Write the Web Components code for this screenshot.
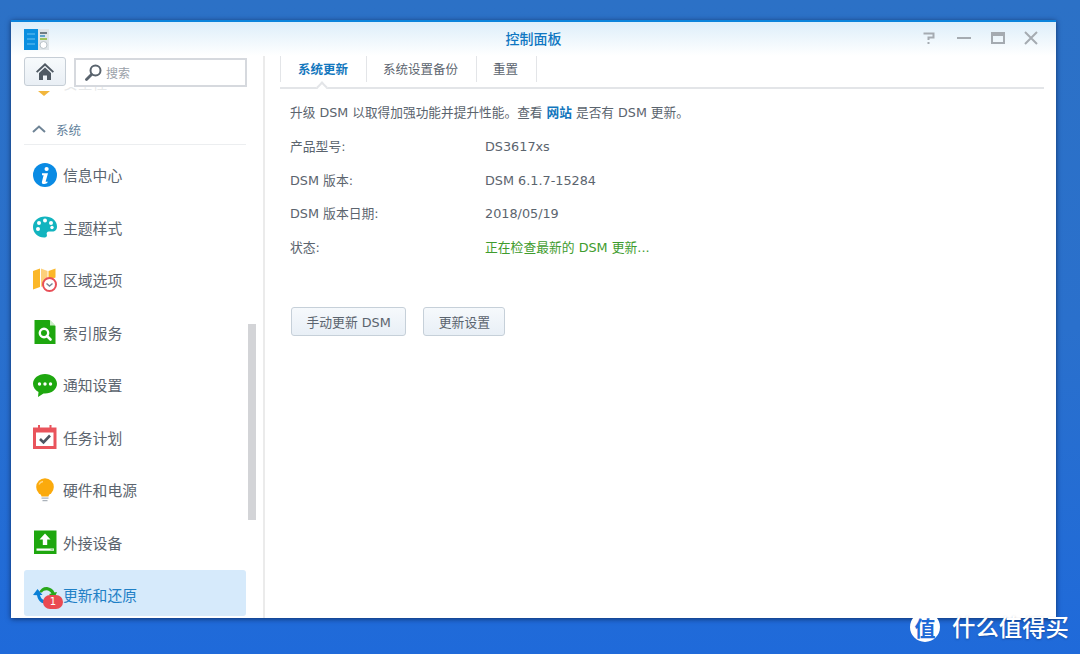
<!DOCTYPE html>
<html lang="zh">
<head>
<meta charset="utf-8">
<title>控制面板</title>
<style>
    html, body { margin: 0; height: 100%; }
    body {
        width: 1080px;
        height: 654px;
        overflow: hidden;
        background: linear-gradient(180deg, #2c71c6 0%, #2a70cc 50%, #1f6ada 100%);
        font-family: "DejaVu Sans", "Noto Sans CJK SC", sans-serif;
    }
    a { color: #1377bd; font-weight: 700; }
</style>
</head>
<body>
<dsm-window title-text="控制面板">
    <dsm-sidebar slot="side">
        <side-item icon="shield" class="cut">安全性</side-item>
        <side-group>系统</side-group>
        <side-item icon="info">信息中心</side-item>
        <side-item icon="palette">主题样式</side-item>
        <side-item icon="map">区域选项</side-item>
        <side-item icon="finder">索引服务</side-item>
        <side-item icon="chat">通知设置</side-item>
        <side-item icon="task">任务计划</side-item>
        <side-item icon="bulb">硬件和电源</side-item>
        <side-item icon="upload">外接设备</side-item>
        <side-item icon="update" badge="1" active>更新和还原</side-item>
    </dsm-sidebar>
    <dsm-tabs slot="main" tabs="系统更新,系统设置备份,重置"></dsm-tabs>
    <update-panel slot="main">
        <span slot="intro">升级 DSM 以取得加强功能并提升性能。查看 <a>网站</a> 是否有 DSM 更新。</span>
        <info-row label="产品型号:">DS3617xs</info-row>
        <info-row label="DSM 版本:">DSM 6.1.7-15284</info-row>
        <info-row label="DSM 版本日期:">2018/05/19</info-row>
        <info-row label="状态:" status>正在检查最新的 DSM 更新...</info-row>
        <dsm-button slot="actions">手动更新 DSM</dsm-button>
        <dsm-button slot="actions">更新设置</dsm-button>
    </update-panel>
</dsm-window>
<site-mark></site-mark>

<script>
const CJK = '"DejaVu Sans", "Noto Sans CJK SC", sans-serif';

const ICONS = {
    shield: '<path d="M5 21h12l-6 5z" fill="#f2b63c"/>',
    info: '<circle cx="12" cy="12" r="12" fill="#0a8be4"/><circle cx="13.6" cy="6" r="2.1" fill="#fff"/><path d="M9 10.2h6l-2.3 8c-.2.8.5.9 1.900.2l-.3 1.500c-1.700.9-3 1.100-4 1-1.300-.2-1.700-1.100-1.300-2.500l1.600-6.200H9z" fill="#fff"/>',
    palette: '<path d="M12 1.500C5.400 1.500 0 6 0 12c0 6 5 10.500 11 10.500 2.800 0 3.300-1.500 2.800-3-.5-1.600.3-3 2.200-3h3.500c2.600 0 4.500-1.500 4.500-5C24 5.500 18.600 1.500 12 1.500z" fill="#12b4bf"/><circle cx="6" cy="8" r="2" fill="#fff"/><circle cx="12" cy="5.500" r="2" fill="#fff"/><circle cx="18" cy="8" r="2" fill="#fff"/><circle cx="5" cy="14" r="2" fill="#fff"/><circle cx="19" cy="12.500" r="1.700" fill="#fff"/>',
    map: '<path d="M0 3l7-2.500v18.500l-7 2.500z" fill="#fbb728"/><path d="M8 .5l6.500 2.500v12l-6.500 4z" fill="#fdd07a"/><path d="M15.500 3l7-2.500v9l-7 3z" fill="#fbb728"/><circle cx="16.500" cy="16.500" r="6.500" fill="#fff" stroke="#e84f58" stroke-width="2"/><path d="M13.500 15.500l3 2.500 3-2.500" fill="none" stroke="#7a8494" stroke-width="1.500"/>',
    finder: '<path d="M1.500 0h15l6 6v18h-21z" fill="#1ea70f"/><path d="M17 0l5.500 5.500H17z" fill="#c9eec4"/><circle cx="11" cy="13" r="4.200" fill="none" stroke="#fff" stroke-width="2.400"/><path d="M14 16l3.500 3.500" stroke="#fff" stroke-width="2.600" stroke-linecap="round"/>',
    chat: '<path d="M12 1C5.400 1 0 5.300 0 10.800c0 3.500 2.200 6.500 5.500 8.200L5 24l5.500-3.500c.5.100 1 .1 1.500.1 6.600 0 12-4.300 12-9.800S18.600 1 12 1z" fill="#1ea70f"/><circle cx="6.500" cy="11" r="1.700" fill="#fff"/><circle cx="12" cy="11" r="1.700" fill="#fff"/><circle cx="17.500" cy="11" r="1.700" fill="#fff"/>',
    task: '<path d="M0 2.500h23.500V24H0z" fill="#e9545c"/><path d="M3 7.500h17.500v13.500H3z" fill="#fff"/><path d="M5 0h2v4H5zM16.500 0h2v4h-2z" fill="#e9545c"/><path d="M7 14l3.500 3.500 6.500-7" fill="none" stroke="#4d5763" stroke-width="2.600"/>',
    bulb: '<circle cx="12" cy="9" r="8.800" fill="#fbaa0c"/><path d="M7.500 15h9l-1 3.500h-7z" fill="#fbaa0c"/><path d="M8.500 19.500h7v1.300h-7zM9.500 22h5v1.300h-5z" fill="#aab2ba"/><path d="M6 6.500c.8-1.700 2.200-2.700 4-3" fill="none" stroke="#ffd98a" stroke-width="1.300"/>',
    upload: '<path d="M1 .5h22.500V24H1z" fill="#1ea70f"/><path d="M12 3.500l5.500 6h-3.300v5.500H9.800V9.500H6.500z" fill="#fff"/><path d="M3.500 18.500h17.500v2.200H3.500z" fill="#fff"/><path d="M17.500 19h3v1h-3z" fill="#a4e19d"/>',
    update: '<path d="M6 9.500C7.500 5.500 11 3.500 15 4.200c3 .5 5.400 2.500 6.500 5.300l2.500-.5-3 7-5-5 2.500-.6C17.500 8.500 15.500 7.200 13.500 7.200c-2 0-3.500.8-4.500 2.300z" fill="#29a81c"/><path d="M0 12l4.500-6 5 6H7c.5 3 2.500 5 5 5.500 1 .2 2 .2 3 0v3.200c-5 .8-10-2-11-8.500z" fill="#0a7fd6"/>'
};

class DsmWindow extends HTMLElement {
    constructor() {
        super();
        this.shadow = this.attachShadow({mode: 'open'});
    }

    connectedCallback() {
        this.shadow.innerHTML = `
            <style>
                :host {
                    display: flex;
                    flex-direction: column;
                    width: 1045px;
                    height: 598px;
                    margin: 20px 0 0 11px;
                    box-sizing: border-box;
                    background: #fff;
                    border-top: 2px solid #0b84dc;
                    box-shadow: 0 1px 5px rgba(8, 30, 70, .75);
                    font-family: ${CJK};
                    overflow: hidden;
                }
                .bar {
                    flex: none;
                    height: 34px;
                    box-sizing: border-box;
                    padding-bottom: 2px;
                    display: grid;
                    grid-template-columns: 1fr auto 1fr;
                    align-items: center;
                    background: linear-gradient(180deg, #ddeefa 0%, #f3f9fd 65%, #fff 100%);
                }
                .logo { margin: 4px 0 0 13px; display: block; }
                .title { font-size: 14px; color: #0f77c2; font-weight: 500; }
                .controls {
                    display: flex;
                    justify-content: flex-end;
                    align-items: center;
                    gap: 19.500px;
                    padding-right: 18px;
                }
                .body { flex: 1; min-height: 0; display: flex; }
                .side { flex: none; width: 252px; border-right: 2px solid #ebebeb; }
                .main { flex: 1; min-width: 0; padding: 0 12px 0 15px; }
            </style>
            <div class="bar">
                <svg class="logo" width="26" height="22" viewBox="0 0 26 22">
                    <rect width="14" height="21" y="0" fill="#0a8fe0"/>
                    <path d="M3 5h8M3 10h8M3 15h8" stroke="#6cc3f2" stroke-width="1"/>
                    <rect x="14" width="11" height="21" fill="#dfe5e8"/>
                    <path d="M16 4h7" stroke="#4d5b63" stroke-width="1.500"/>
                    <path d="M16 7h5" stroke="#3a8fc0" stroke-width="1.500"/>
                    <path d="M16 10h7" stroke="#8ab92b" stroke-width="1.500"/>
                    <circle cx="19.500" cy="16" r="3.500" fill="#fff" stroke="#b9c2c8"/>
                </svg>
                <span class="title">${this.getAttribute('title-text')}</span>
                <div class="controls">
                    <svg width="14" height="14" viewBox="0 0 14 14" style="margin-right:2px"><path d="M1.500 2.500h10v4H6.500v2.500" fill="none" stroke="#a5abb1" stroke-width="2"/><path d="M5.500 11h2v2h-2z" fill="#a5abb1"/></svg>
                    <svg width="14" height="14" viewBox="0 0 14 14"><path d="M0 7h14" stroke="#a5abb1" stroke-width="2"/></svg>
                    <svg width="14" height="14" viewBox="0 0 14 14"><path d="M1 2h12v10H1z" fill="none" stroke="#a5abb1" stroke-width="2"/><path d="M1 2h12v3H1z" fill="#a5abb1"/></svg>
                    <svg width="14" height="14" viewBox="0 0 14 14"><path d="M1 1l12 12M13 1L1 13" stroke="#a5abb1" stroke-width="2"/></svg>
                </div>
            </div>
            <div class="body">
                <div class="side"><slot name="side"></slot></div>
                <div class="main"><slot name="main"></slot></div>
            </div>
        `;
    }
}

class DsmSidebar extends HTMLElement {
    constructor() {
        super();
        this.shadow = this.attachShadow({mode: 'open'});
    }

    connectedCallback() {
        this.shadow.innerHTML = `
            <style>
                :host {
                    display: flex;
                    flex-direction: column;
                    height: 100%;
                    position: relative;
                }
                .top {
                    flex: none;
                    display: flex;
                    gap: 8px;
                    padding: 1px 0 0 13px;
                    height: 31px;
                    box-sizing: border-box;
                }
                .home {
                    box-sizing: border-box;
                    width: 42px;
                    height: 29px;
                    display: flex;
                    align-items: center;
                    justify-content: center;
                    border: 1px solid #c6ced6;
                    border-radius: 3px;
                    background: linear-gradient(180deg, #f7fafc, #e9eff5);
                }
                .search {
                    box-sizing: border-box;
                    width: 173px;
                    height: 29px;
                    margin-top: 1px;
                    display: flex;
                    align-items: center;
                    gap: 4px;
                    padding-left: 9px;
                    border: 2px solid #d6d9de;
                    font-size: 12px;
                    color: #9aa1a9;
                }
                .list {
                    flex: 1;
                    min-height: 0;
                    overflow: hidden;
                    position: relative;
                    padding-left: 13px;
                    width: 222px;
                }
                .inner { margin-top: -31px; }
                .fade {
                    position: absolute;
                    left: 0; top: 0;
                    width: 100%;
                    height: 4px;
                    background: rgba(255,255,255,.85);
                }
                .thumb {
                    position: absolute;
                    left: 237px;
                    top: 268px;
                    width: 8px;
                    height: 196px;
                    background: #d3d4d7;
                }
            </style>
            <div class="top">
                <div class="home">
                    <svg width="18" height="17" viewBox="0 0 18 17"><path d="M9 0L0 8.500l1.300 1.300L9 2.700l7.700 7.100L18 8.500z" fill="#4f5963"/><path d="M3 10l6-5.500 6 5.500v7h-4v-4.500H7V17H3z" fill="#4f5963"/></svg>
                </div>
                <div class="search">
                    <svg width="17" height="17" viewBox="0 0 17 17"><circle cx="10.500" cy="6.500" r="5" fill="none" stroke="#59636d" stroke-width="2"/><path d="M6.500 10.500L1.500 15.500" stroke="#59636d" stroke-width="2.800" stroke-linecap="round"/></svg>
                    <span>搜索</span>
                </div>
            </div>
            <div class="list">
                <div class="inner"><slot></slot></div>
                <div class="fade"></div>
            </div>
            <div class="thumb"></div>
        `;
    }
}

class SideGroup extends HTMLElement {
    constructor() {
        super();
        this.shadow = this.attachShadow({mode: 'open'});
        this.shadow.innerHTML = `
            <style>
                :host {
                    display: flex;
                    align-items: center;
                    gap: 10px;
                    box-sizing: border-box;
                    height: 29px;
                    margin: 7px 0 4px;
                    padding: 0 0 1px 8px;
                    border-bottom: 1px solid #eceef0;
                    font-size: 12.500px;
                    color: #5f7f9b;
                    width: 222px;
                }
            </style>
            <svg width="14" height="8" viewBox="0 0 14 8"><path d="M1 7l6-5.500L13 7" fill="none" stroke="#6f8496" stroke-width="2"/></svg>
            <slot></slot>
        `;
    }
}

class SideItem extends HTMLElement {
    constructor() {
        super();
        this.shadow = this.attachShadow({mode: 'open'});
    }

    connectedCallback() {
        const badge = this.getAttribute('badge');
        this.shadow.innerHTML = `
            <style>
                :host {
                    display: block;
                    width: 222px;
                    height: 52.500px;
                    padding-top: 1.500px;
                    box-sizing: border-box;
                }
                .row {
                    position: relative;
                    height: 46px;
                    display: flex;
                    align-items: center;
                    gap: 6px;
                    padding: 3px 0 0 9px;
                    box-sizing: border-box;
                    border-radius: 3px;
                    font-size: 14.800px;
                    color: #5b646e;
                }
                :host([active]) .row { background: #d6eafb; color: #1f80c6; }
                svg { flex: none; display: block; overflow: visible; }
                .badge {
                    position: absolute;
                    left: 19px;
                    top: 25px;
                    width: 20px;
                    height: 14px;
                    border-radius: 7px;
                    background: #ea4a52;
                    color: #fff;
                    font-size: 10px;
                    line-height: 14px;
                    text-align: center;
                }
            </style>
            <div class="row">
                <svg width="24" height="24" viewBox="0 0 24 24">${ICONS[this.getAttribute('icon')]}</svg>
                <span><slot></slot></span>
                ${badge ? `<span class="badge">${badge}</span>` : ''}
            </div>
        `;
    }
}

class DsmTabs extends HTMLElement {
    constructor() {
        super();
        this.shadow = this.attachShadow({mode: 'open'});
    }

    connectedCallback() {
        const tabs = this.getAttribute('tabs').split(',');
        this.shadow.innerHTML = `
            <style>
                :host {
                    display: flex;
                    position: relative;
                    height: 33px;
                    box-sizing: border-box;
                    border-bottom: 2px solid #e3e5e8;
                    font-size: 12.500px;
                    color: #5b646e;
                }
                .tab {
                    height: 26px;
                    line-height: 27px;
                    padding: 0 18px 0 16px;
                    border-right: 1px solid #e3e5e8;
                }
                .tab.on { padding-left: 17px; border-left: 1px solid #e3e5e8; color: #1377bd; font-weight: 700; }
                .caret {
                    position: absolute;
                    left: 38px;
                    bottom: -2px;
                    width: 8px;
                    height: 8px;
                    box-sizing: border-box;
                    background: #fff;
                    border-left: 2px solid #e3e5e8;
                    border-top: 2px solid #e3e5e8;
                    transform: translateY(2px) rotate(45deg);
                }
            </style>
            ${tabs.map((t, i) => `<div class="tab${i === 0 ? ' on' : ''}">${t}</div>`).join('')}
            <div class="caret"></div>
        `;
    }
}

class UpdatePanel extends HTMLElement {
    constructor() {
        super();
        this.shadow = this.attachShadow({mode: 'open'});
        this.shadow.innerHTML = `
            <style>
                :host {
                    display: block;
                    padding: 14px 0 0 10px;
                    font-size: 12.800px;
                    color: #5b646e;
                }
                .intro { height: 20px; line-height: 20px; margin-bottom: 14px; font-size: 12.700px; }
                .rows { display: flex; flex-direction: column; gap: 13.600px; }
                .actions { display: flex; gap: 17px; margin-top: 49px; padding-left: 1px; }
            </style>
            <div class="intro"><slot name="intro"></slot></div>
            <div class="rows"><slot></slot></div>
            <div class="actions"><slot name="actions"></slot></div>
        `;
    }
}

class InfoRow extends HTMLElement {
    constructor() {
        super();
        this.shadow = this.attachShadow({mode: 'open'});
    }

    connectedCallback() {
        this.shadow.innerHTML = `
            <style>
                :host {
                    display: grid;
                    grid-template-columns: 195px 1fr;
                    height: 20px;
                    line-height: 20px;
                }
                :host([status]) .val { color: #3f9c2e; }
            </style>
            <span>${this.getAttribute('label')}</span>
            <span class="val"><slot></slot></span>
        `;
    }
}

class DsmButton extends HTMLElement {
    constructor() {
        super();
        this.shadow = this.attachShadow({mode: 'open'});
        this.shadow.innerHTML = `
            <style>
                :host {
                    display: block;
                    height: 29px;
                    line-height: 29px;
                    box-sizing: border-box;
                    padding: 0 14.500px;
                    border: 1px solid #c6d0d9;
                    border-radius: 3px;
                    background: linear-gradient(180deg, #f6f9fc, #e8eff6);
                    font-size: 12.800px;
                    color: #5b646e;
                }
            </style>
            <slot></slot>
        `;
    }
}

class SiteMark extends HTMLElement {
    constructor() {
        super();
        this.shadow = this.attachShadow({mode: 'open'});
        this.shadow.innerHTML = `
            <style>
                :host {
                    position: absolute;
                    left: 910px;
                    top: 612px;
                    display: flex;
                    align-items: center;
                    gap: 12px;
                    height: 30px;
                    color: #fff;
                    font-family: "Noto Sans CJK SC", sans-serif;
                }
                .dot {
                    width: 30px;
                    height: 30px;
                    border-radius: 50%;
                    background: #fff;
                    color: #1f6ad6;
                    font-size: 21px;
                    font-weight: 700;
                    line-height: 30px;
                    text-align: center;
                }
                .name {
                    font-size: 23.400px;
                    font-weight: 500;
                    line-height: 30px;
                    margin-top: -2px;
                    white-space: nowrap;
                    text-shadow: 0 1px 2px rgba(0, 30, 80, .35);
                }
            </style>
            <div class="dot">值</div>
            <div class="name">什么值得买</div>
        `;
    }
}

customElements.define('dsm-window', DsmWindow);
customElements.define('dsm-sidebar', DsmSidebar);
customElements.define('side-group', SideGroup);
customElements.define('side-item', SideItem);
customElements.define('dsm-tabs', DsmTabs);
customElements.define('update-panel', UpdatePanel);
customElements.define('info-row', InfoRow);
customElements.define('dsm-button', DsmButton);
customElements.define('site-mark', SiteMark);
</script>
</body>
</html>
